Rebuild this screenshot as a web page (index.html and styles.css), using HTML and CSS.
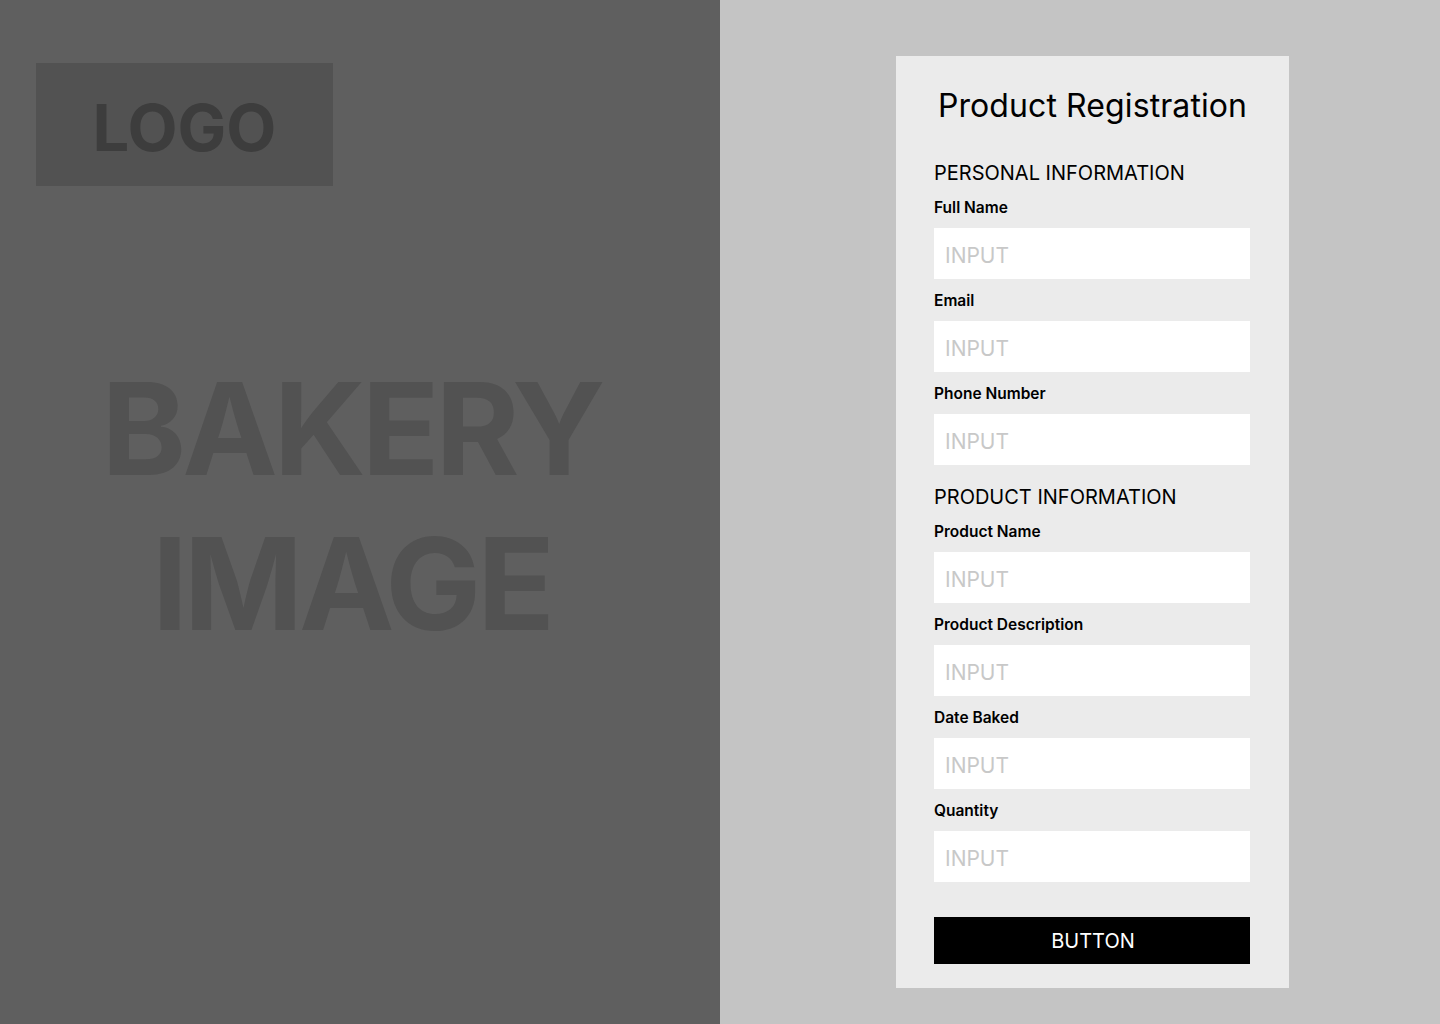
FILE: index.html
```html
<!DOCTYPE html>
<html lang="en">
<head>
<meta charset="utf-8">
<title>Product Registration</title>
<link rel="stylesheet" href="styles.css">
</head>
<body>
<div class="page">
  <section class="hero">
    <div class="logo"><span>LOGO</span></div>
    <div class="hero-text">BAKERY<br>IMAGE</div>
  </section>
  <section class="side">
    <form class="card">
      <h1 class="title">Product Registration</h1>
      <h2 class="section">PERSONAL INFORMATION</h2>
      <label class="field"><span class="label">Full Name</span><span class="input">INPUT</span></label>
      <label class="field"><span class="label">Email</span><span class="input">INPUT</span></label>
      <label class="field"><span class="label">Phone Number</span><span class="input">INPUT</span></label>
      <h2 class="section section-2">PRODUCT INFORMATION</h2>
      <label class="field"><span class="label">Product Name</span><span class="input">INPUT</span></label>
      <label class="field"><span class="label">Product Description</span><span class="input">INPUT</span></label>
      <label class="field"><span class="label">Date Baked</span><span class="input">INPUT</span></label>
      <label class="field"><span class="label">Quantity</span><span class="input">INPUT</span></label>
      <div class="button">BUTTON</div>
    </form>
  </section>
</div>
</body>
</html>
```
FILE: styles.css
```css
* { box-sizing: border-box; margin: 0; padding: 0; }
html, body { width: 1440px; height: 1024px; overflow: hidden; }
body { font-family: Inter, "Noto Sans", sans-serif; color: #000; }

.page { display: flex; width: 1440px; height: 1024px; }

.hero {
  width: 720px;
  height: 1024px;
  background: #5f5f5f;
  display: flex;
  flex-direction: column;
  padding: 63px 0 0 36px;
}
.logo {
  width: 297px;
  height: 123px;
  background: #525252;
  display: flex;
  align-items: center;
  justify-content: center;
}
.logo span {
  font-family: Inter, sans-serif;
  font-weight: 700;
  font-size: 65px;
  color: #3d3d3d;
  line-height: 1;
  margin-top: 6px;
}
.hero-text {
  margin-top: 165px;
  margin-left: -36px;
  width: 703px;
  text-align: center;
  font-family: Inter, sans-serif;
  font-weight: 700;
  font-size: 128px;
  letter-spacing: -4px;
  line-height: 155px;
  color: #525252;
}

.side {
  width: 720px;
  height: 1024px;
  background: #c4c4c4;
  padding: 56px 0 0 176px;
}
.card {
  width: 393px;
  background: #ebebeb;
  padding: 26px 39px 24px 38px;
  display: flex;
  flex-direction: column;
}
.title {
  font-weight: 400;
  font-size: 32px;
  line-height: 48px;
  text-align: center;
  margin-left: -38px;
  margin-right: -39px;
  letter-spacing: 0.1px;
}
.section {
  font-weight: 400;
  font-size: 20px;
  line-height: 24px;
  margin-top: 31px;
  margin-bottom: 12px;
}
.section-2 { margin-top: 9px; }
.field { display: flex; flex-direction: column; margin-bottom: 11px; }
.label {
  font-weight: 600;
  font-size: 15.5px;
  line-height: 20px;
  margin-bottom: 11px;
  position: relative;
  top: 1px;
}
.input {
  height: 51px;
  background: #fff;
  color: #c8c8c8;
  font-size: 21px;
  line-height: 51px;
  padding: 2px 0 0 11px;
}
.button {
  margin-top: 24px;
  height: 47px;
  background: #000;
  color: #fff;
  font-size: 20px;
  line-height: 47px;
  text-align: center;
  padding: 1px 0 0 2px;
}
```
